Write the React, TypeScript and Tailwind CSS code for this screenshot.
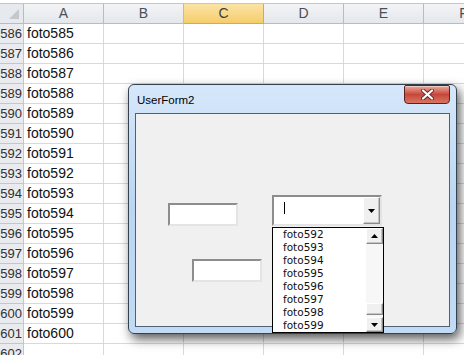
import React from 'react';

const COLUMNS = ['A', 'B', 'C', 'D', 'E', 'F'];
const ROWS = Array.from({ length: 17 }, (_, i) => 586 + i);
const LIST_ITEMS = ['foto592', 'foto593', 'foto594', 'foto595', 'foto596', 'foto597', 'foto598', 'foto599'];

const Arrow: React.FC<{ up?: boolean }> = ({ up }) => (
  <svg width="7" height="4" viewBox="0 0 7 4" className="block">
    {up ? <polygon points="0,4 7,4 3.5,0" fill="#000" /> : <polygon points="0,0 7,0 3.5,4" fill="#000" />}
  </svg>
);

const RaisedButton: React.FC<{ className?: string; children?: React.ReactNode }> = ({ className, children }) => (
  <div
    className={
      'flex items-center justify-center bg-[#f0f0f0] border border-t-white border-l-white border-r-[#8a8a8a] border-b-[#8a8a8a] shadow-[inset_-1px_-1px_0_#c4c4c4] ' +
      (className ?? '')
    }
  >
    {children}
  </div>
);

const TextBox: React.FC<{ className: string }> = ({ className }) => (
  <div
    className={
      'absolute bg-white border-2 border-t-[#8d8d8d] border-l-[#8d8d8d] border-r-[#e4e4e4] border-b-[#e4e4e4] ' + className
    }
  />
);

const Spreadsheet: React.FC = () => (
  <div className="flex flex-col">
    <div className="h-[4px] bg-white border-b border-[#c3c7cc]" />
    {/* column headers */}
    <div className="flex h-[20px]">
      <div className="w-[24px] shrink-0 relative border-r border-b border-[#b7bcc3] bg-[#e6e9ed]">
        <svg width="10" height="10" viewBox="0 0 10 10" className="absolute left-[9px] top-[5px]">
          <polygon points="10,0 10,10 0,10" fill="#c4c8cd" />
        </svg>
      </div>
      {COLUMNS.map((c) => (
        <div
          key={c}
          className={
            c === 'C'
              ? 'w-[80px] shrink-0 flex items-center justify-center border-r border-b border-[#e0a83e] bg-linear-to-b from-[#fbe3a6] to-[#f5cd6a] text-[#3d3d3d]'
              : 'w-[80px] shrink-0 flex items-center justify-center border-r border-b border-[#b7bcc3] bg-linear-to-b from-[#f3f4f6] to-[#e4e7eb] text-[#4a4f56]'
          }
        >
          {c}
        </div>
      ))}
    </div>
    {ROWS.map((r) => (
      <div key={r} className="flex h-[20px]">
        <div className="w-[24px] shrink-0 flex items-center justify-end pr-[1px] overflow-hidden border-r border-b border-[#c3c7cc] bg-[#e9ebee] text-[13px] text-[#303030]">
          {r}
        </div>
        {COLUMNS.map((c) => (
          <div key={c} className="w-[80px] shrink-0 flex items-center pl-[3px] border-r border-b border-[#d9d9d9] bg-white text-[#111]">
            {c === 'A' && r < 602 ? `foto${r - 1}` : ''}
          </div>
        ))}
      </div>
    ))}
  </div>
);

const UserForm: React.FC = () => (
  <div className="absolute left-[128px] top-[84px] w-[329px] h-[250px] rounded-[6px] border border-[#34414f] bg-linear-to-b from-[#d6e7fa] via-[#bad6f3] to-[#c2dbf5] shadow-[3px_5px_11px_rgba(0,0,0,0.65)] flex flex-col">
    {/* title bar */}
    <div className="h-[28px] flex items-start justify-between pl-[8px] pr-[6px] shrink-0">
      <span className="mt-[8px] text-[11.5px] leading-[14px] text-black font-['Liberation_Sans',Arial,sans-serif]">UserForm2</span>
      <div className="w-[46px] h-[19px] rounded-b-[4px] rounded-t-[2px] border border-[#5c211c] bg-linear-to-b from-[#e7a99c] via-[#c7463b] to-[#d97563] flex items-center justify-center shadow-[inset_0_1px_0_rgba(255,255,255,0.45)]">
        <svg width="13" height="11" viewBox="0 0 13 11">
          <path d="M2 1.5 L11 9.5 M11 1.5 L2 9.5" stroke="#6b2a24" strokeWidth="4" strokeLinecap="round" />
          <path d="M2 1.5 L11 9.5 M11 1.5 L2 9.5" stroke="#ffffff" strokeWidth="2.2" strokeLinecap="round" />
        </svg>
      </div>
    </div>
    {/* client area */}
    <div className="flex-1 mx-[6px] mb-[6px] border border-[#4f5f74] bg-[#f0f0f0] relative">
      <TextBox className="left-[32px] top-[89px] w-[70px] h-[23px]" />
      <TextBox className="left-[56px] top-[145px] w-[70px] h-[23px]" />
      {/* combo box */}
      <div className="absolute left-[136px] top-[81px] w-[110px] h-[31px] bg-white border-2 border-t-[#8d8d8d] border-l-[#8d8d8d] border-r-[#e4e4e4] border-b-[#e4e4e4] flex justify-between">
        <div className="ml-[10px] mt-[5px] w-[1px] h-[12px] bg-black" />
        <RaisedButton className="w-[17px] h-full">
          <Arrow />
        </RaisedButton>
      </div>
      {/* dropdown list */}
      <div className="absolute z-10 left-[136px] top-[113px] w-[112px] h-[106px] bg-white border border-black flex">
        <div className="flex-1 overflow-hidden pl-[10px] font-['DejaVu_Sans',Tahoma,sans-serif] text-[10.5px] text-[#111]">
          {LIST_ITEMS.map((item) => (
            <div key={item} className="h-[13px] leading-[13px]">
              {item}
            </div>
          ))}
        </div>
        <div className="w-[17px] flex flex-col bg-[#f3f3f3]">
          <RaisedButton className="h-[16px] shrink-0">
            <Arrow up />
          </RaisedButton>
          <div className="flex-1 flex flex-col justify-end pb-[2px] bg-[#f7f7f7]">
            <RaisedButton className="h-[12px]" />
          </div>
          <RaisedButton className="h-[15px] shrink-0">
            <Arrow />
          </RaisedButton>
        </div>
      </div>
    </div>
  </div>
);

export default function App() {
  return (
    <div className="relative w-[464px] h-[355px] overflow-hidden bg-white font-['Liberation_Sans',Arial,sans-serif] text-[14px]">
      <Spreadsheet />
      <UserForm />
    </div>
  );
}
